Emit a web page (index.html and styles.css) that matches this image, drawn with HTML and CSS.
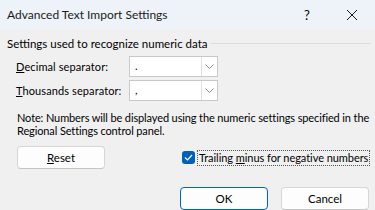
FILE: index.html
```html
<!DOCTYPE html>
<html>
<head>
<meta charset="utf-8">
<link rel="stylesheet" href="styles.css">
</head>
<body>
<div class="dialog">
  <div class="titlebar">
    <span class="title">Advanced Text Import Settings</span>
    <span class="help">?</span>
    <span class="close">
      <svg width="12" height="12" viewBox="0 0 12 12"><path d="M1 1 L11 11 M11 1 L1 11" stroke="#1a1a1a" stroke-width="1" fill="none"/></svg>
    </span>
  </div>
  <div class="body">
    <div class="group-head">
      <span>Settings used to recognize numeric data</span>
      <span class="rule"></span>
    </div>
    <div class="field">
      <label><u>D</u>ecimal separator:</label>
      <div class="combo">
        <span class="value">.</span>
        <span class="drop"><svg width="9" height="5" viewBox="0 0 9 5"><path d="M0.5 0.5 L4.5 4.5 L8.5 0.5" stroke="#8a8a8a" fill="none"/></svg></span>
      </div>
    </div>
    <div class="field">
      <label><u>T</u>housands separator:</label>
      <div class="combo">
        <span class="value">,</span>
        <span class="drop"><svg width="9" height="5" viewBox="0 0 9 5"><path d="M0.5 0.5 L4.5 4.5 L8.5 0.5" stroke="#8a8a8a" fill="none"/></svg></span>
      </div>
    </div>
    <p class="note">Note: Numbers will be displayed using the numeric settings specified in the Regional Settings control panel.</p>
    <div class="row">
      <button class="btn"><u>R</u>eset</button>
      <div class="check">
        <span class="box"><svg width="9" height="7" viewBox="0 0 9 7"><path d="M1 3.5 L3.5 6 L8 1" stroke="#fff" stroke-width="1.2" fill="none"/></svg></span>
        <span class="focus">Trailing <u>m</u>inus for negative numbers</span>
      </div>
    </div>
    <div class="actions">
      <button class="btn primary">OK</button>
      <button class="btn">Cancel</button>
    </div>
  </div>
</div>
</body>
</html>
```
FILE: styles.css
```css
html, body {
  margin: 0;
  padding: 0;
  background: #f0f0f0;
}
.dialog {
  width: 375px;
  height: 210px;
  font-family: Lato, "Noto Sans", sans-serif;
  font-size: 11px;
  letter-spacing: 0.1px;
  color: #000;
  overflow: hidden;
}
.titlebar {
  height: 29px;
  background: #eef3f9;
  display: flex;
  align-items: center;
}
.title {
  margin-left: 7px;
  flex: 1;
  font-size: 12px;
  letter-spacing: 0;
  color: #1a1a1a;
}
.help {
  width: 12px;
  text-align: center;
  font-size: 13px;
  margin-right: 33px;
}
.close {
  display: flex;
  margin-right: 17px;
}
.body {
  padding: 0 4px 0 7px;
}
.group-head {
  display: flex;
  align-items: center;
  height: 16px;
  margin-top: 6px;
  white-space: nowrap;
  font-size: 11.5px;
  letter-spacing: 0;
}
.rule {
  flex: 1;
  height: 1px;
  background: #dcdcdc;
  margin-left: 4px;
}
.field {
  display: flex;
  align-items: center;
  height: 21px;
  margin-left: 9px;
  white-space: nowrap;
}
.group-head + .field {
  margin-top: 5px;
}
.field + .field {
  margin-top: 3px;
}
.field label {
  width: 113px;
}
.combo {
  width: 87px;
  height: 19px;
  border: 1px solid #c8c8c8;
  background: #fff;
  display: flex;
}
.value {
  flex: 1;
  padding-left: 5px;
  line-height: 17px;
}
.drop {
  width: 15px;
  border-left: 1px solid #e0e0e0;
  display: flex;
  align-items: center;
  justify-content: center;
}
.note {
  margin: 10px 0 0 10px;
  line-height: 13px;
  width: 356px;
  letter-spacing: -0.12px;
}
.row {
  display: flex;
  align-items: center;
  margin: 9px 0 0 10px;
}
.btn {
  font-family: inherit;
  font-size: 11.5px;
  color: #000;
  width: 88px;
  height: 23px;
  flex-shrink: 0;
  background: #fdfdfd;
  border: 1px solid #d6d6d6;
  border-bottom-color: #c4c4c4;
  border-radius: 4px;
  padding: 0;
}
.check {
  display: flex;
  align-items: center;
  margin-left: 77px;
  white-space: nowrap;
  letter-spacing: -0.05px;
}
.box {
  width: 13px;
  height: 13px;
  border-radius: 3px;
  background: #005fb8;
  display: flex;
  align-items: center;
  justify-content: center;
  margin-right: 2px;
}
.focus {
  border: 1px dotted #555;
  padding: 0 1px;
  line-height: 14px;
}
.actions {
  display: flex;
  justify-content: flex-end;
  gap: 13px;
  margin-top: 18px;
  margin-right: 2px;
}
.primary {
  border: 1px solid #0067c0;
}
```
